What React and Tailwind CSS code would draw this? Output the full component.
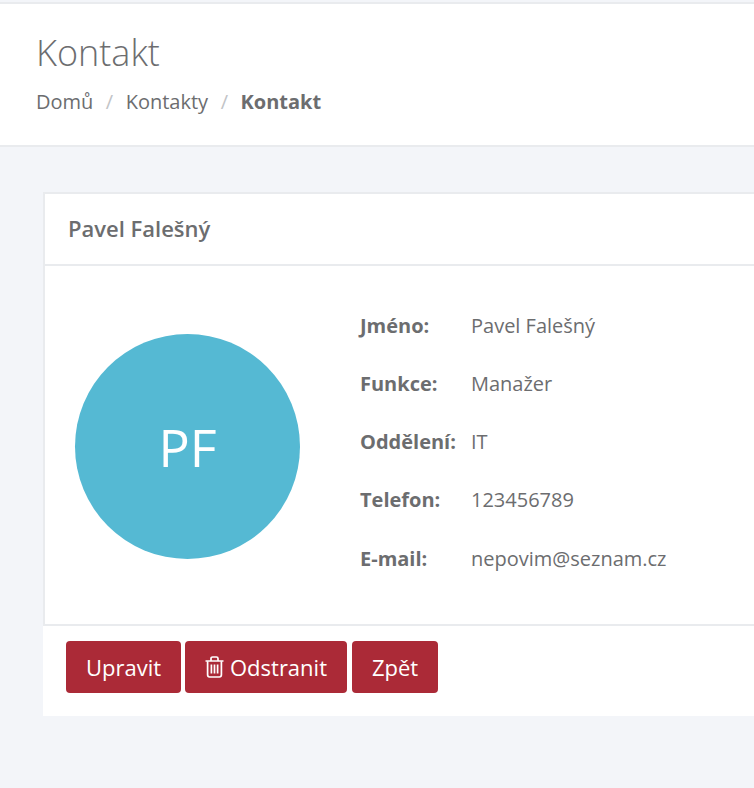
const rows = [
  ["Jméno:", "Pavel Falešný"],
  ["Funkce:", "Manažer"],
  ["Oddělení:", "IT"],
  ["Telefon:", "123456789"],
  ["E-mail:", "nepovim@seznam.cz"],
];

function TrashIcon() {
  return (
    <svg width="19" height="22" viewBox="0 0 19 22" fill="none" stroke="currentColor" strokeWidth="1.7" className="mr-[6px] shrink-0">
      <path d="M0.5 5h18M6 4.8V2.6C6 1.7 6.7 1 7.6 1h3.8C12.3 1 13 1.7 13 2.6v2.2" />
      <path d="M2.6 5.2v13.6c0 1.2.9 2.2 2 2.2h9.8c1.1 0 2-1 2-2.2V5.2" />
      <path d="M6.4 8.5v9M9.5 8.5v9M12.6 8.5v9" />
    </svg>
  );
}

function Btn({ className, children }) {
  return (
    <button className={`flex items-center justify-center h-[52px] rounded-[4px] bg-[#ab2a37] text-white text-[22px] ${className}`}>
      {children}
    </button>
  );
}

export default function App() {
  return (
    <div className="w-[754px] h-[788px] overflow-hidden bg-[#f3f5f9] text-[#6c6d6f] font-['Open_Sans',sans-serif]">
      {/* Header */}
      <div className="mt-[2px] h-[145px] bg-white border-t-2 border-b-2 border-[#e9ebee] pl-[36px] pt-[26px]">
        <h1 className="text-[36px] leading-[46px] font-light">Kontakt</h1>
        <div className="flex items-center mt-[12px] text-[20px] leading-[28px]">
          <span>Domů</span>
          <span className="mx-[12.5px] text-[#c2c4c7]">/</span>
          <span>Kontakty</span>
          <span className="mx-[12.5px] text-[#c2c4c7]">/</span>
          <span className="font-bold">Kontakt</span>
        </div>
      </div>

      {/* Card */}
      <div className="ml-[43px] mt-[45px] w-[711px] bg-white">
        <div className="border-2 border-r-0 border-[#e9ebee]">
          <div className="h-[72px] border-b-2 border-[#e9ebee] pl-[23px] pb-[2px] flex items-center">
            <h2 className="text-[22px] font-semibold">Pavel Falešný</h2>
          </div>
          <div className="h-[358px] flex">
            <div className="ml-[30px] mt-[68px] w-[225px] h-[225px] rounded-full bg-[#55b9d3] flex items-center justify-center text-white text-[52px] leading-none">
              PF
            </div>
            <div className="ml-[60px] mt-[43.6px] flex flex-col gap-[26.25px]">
              {rows.map(([label, value]) => (
                <div key={label} className="flex h-[32px] items-center text-[20px]">
                  <span className="w-[111px] font-bold">{label}</span>
                  <span>{value}</span>
                </div>
              ))}
            </div>
          </div>
        </div>
        <div className="h-[90px] pl-[23px] pt-[15px] flex gap-[4px]">
          <Btn className="w-[115px]">Upravit</Btn>
          <Btn className="w-[162px]"><TrashIcon />Odstranit</Btn>
          <Btn className="w-[86px] ml-[1px]">Zpět</Btn>
        </div>
      </div>
    </div>
  );
}
